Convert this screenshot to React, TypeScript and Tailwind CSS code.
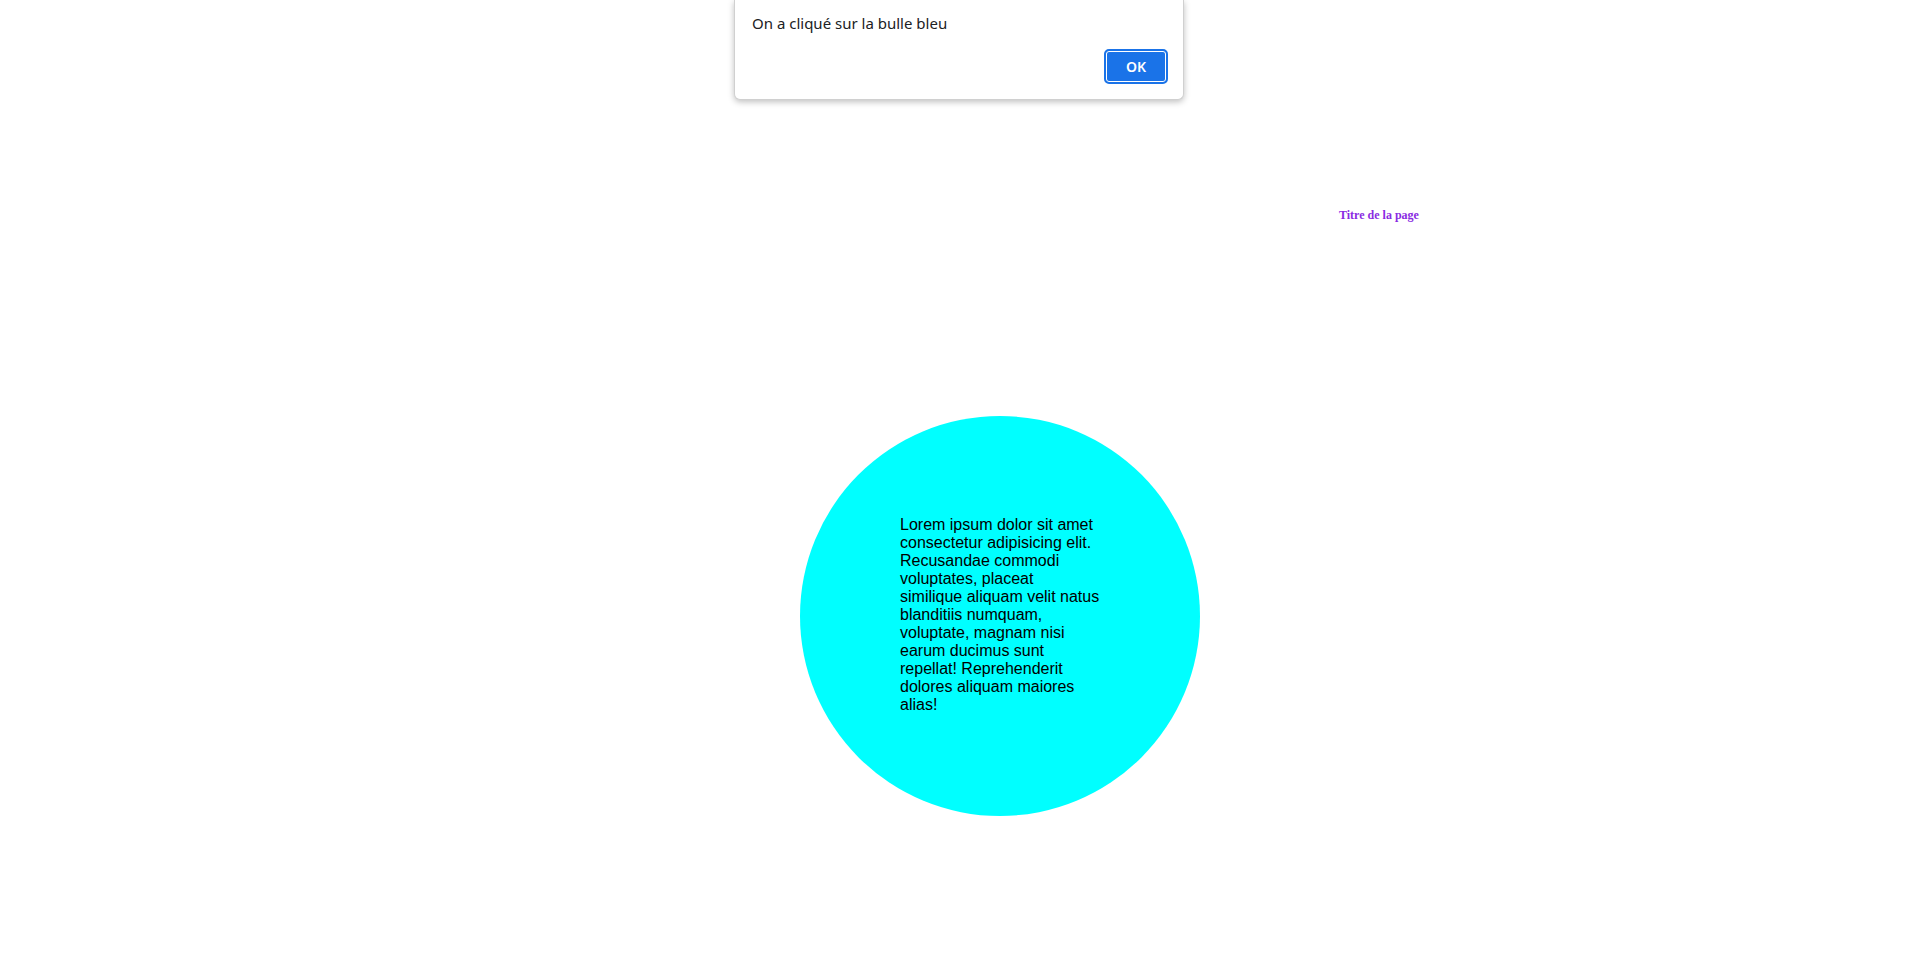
export default function App() {
  return (
    <div className="relative min-h-[965px] w-full bg-white">
      <div className="pl-[1339px] pt-[208px]">
        <p className="text-[12px] leading-[14px] font-bold text-[#8a2be2]" style={{ fontFamily: '"Liberation Serif", serif' }}>
          Titre de la page
        </p>
      </div>
      <div className="ml-[800px] mt-[194px] flex h-[400px] w-[400px] items-center justify-center rounded-full bg-[#00ffff]">
        <p className="-mt-[2px] w-[200px] text-[16px] leading-[18px] text-black" style={{ fontFamily: '"Liberation Sans", Arial, sans-serif' }}>
          Lorem ipsum dolor sit amet consectetur adipisicing elit. Recusandae commodi voluptates, placeat similique aliquam velit natus blanditiis numquam, voluptate, magnam nisi earum ducimus sunt repellat! Reprehenderit dolores aliquam maiores alias!
        </p>
      </div>

      <div
        className="absolute left-[734px] top-0 w-[450px] h-[100px] overflow-hidden rounded-b-[6px] border border-t-0 border-[#d0d0d0] bg-white shadow-[0_2px_6px_rgba(0,0,0,0.25)]"
        style={{ fontFamily: '"Noto Sans", "Open Sans", sans-serif' }}
      >
        <div className="flex flex-col px-[17px] pt-[12px]">
          <p className="text-[15px] leading-[22px] text-[#202124]">On a cliqué sur la bulle bleu</p>
          <div className="mt-[15px] flex justify-end">
            <button className="mr-[-2px] flex h-[35px] w-[64px] items-center justify-center rounded-[5px] border-2 border-[#1a73e8] bg-[#1a73e8] text-[14px] font-semibold text-white shadow-[inset_0_0_0_1px_#ffffff]">
              OK
            </button>
          </div>
        </div>
      </div>
    </div>
  );
}
